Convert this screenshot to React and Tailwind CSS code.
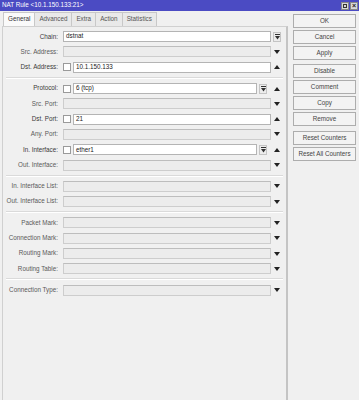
import React from "react";

const rows = [
  { label: "Chain:", value: "dstnat", filled: true, side: "box" },
  { label: "Src. Address:", side: "down" },
  { label: "Dst. Address:", value: "10.1.150.133", filled: true, check: true, side: "up" },
  "sep",
  { label: "Protocol:", value: "6 (tcp)", filled: true, check: true, box: true, side: "up" },
  { label: "Src. Port:", side: "down" },
  { label: "Dst. Port:", value: "21", filled: true, check: true, side: "up" },
  { label: "Any. Port:", side: "down" },
  { label: "In. Interface:", value: "ether1", filled: true, check: true, box: true, side: "up" },
  { label: "Out. Interface:", side: "down" },
  "sep",
  { label: "In. Interface List:", side: "down" },
  { label: "Out. Interface List:", side: "down" },
  "sep",
  { label: "Packet Mark:", side: "down" },
  { label: "Connection Mark:", side: "down" },
  { label: "Routing Mark:", side: "down" },
  { label: "Routing Table:", side: "down" },
  "sep",
  { label: "Connection Type:", side: "down" },
];

const tabs = ["General", "Advanced", "Extra", "Action", "Statistics"];

function Arrow({ up }) {
  return (
    <svg width="6" height="4" viewBox="0 0 6 4">
      {up ? (
        <polygon points="0,4 6,4 3,0" fill="#222" />
      ) : (
        <polygon points="0,0 6,0 3,4" fill="#222" />
      )}
    </svg>
  );
}

function DropBox() {
  return (
    <div className="w-[8px] h-[10px] border border-[#c4c4c4] bg-[#ececec] flex items-center justify-center">
      <svg width="5" height="6" viewBox="0 0 5 6">
        <rect x="0" y="0" width="5" height="1" fill="#333" />
        <polygon points="0,2 5,2 2.5,5.5" fill="#333" />
      </svg>
    </div>
  );
}

function Row({ row }) {
  return (
    <div className="flex items-center h-[15.3px]">
      <div
        className={`w-[56px] text-right pr-[1px] ${
          row.filled ? "text-[#3a3a3a]" : "text-[#5a5a5a]"
        }`}
      >
        {row.label}
      </div>
      <div className="flex items-center flex-1 ml-[4px]">
        {row.check && (
          <div className="w-[8px] h-[8px] border border-[#9a9a9a] bg-white mr-[2px]" />
        )}
        <div
          className={`flex-1 h-[11px] border px-[2px] flex items-center ${
            row.filled
              ? "bg-white border-[#b4b4b4] text-[#222]"
              : "bg-[#ececec] border-[#cdcdcd] border-t-[#bdbdbd]"
          }`}
        >
          {row.value}
        </div>
        {row.box && (
          <div className="ml-[2px] mr-[4px]">
            <DropBox />
          </div>
        )}
      </div>
      <div className="w-[12px] flex items-center justify-center">
        {row.side === "box" && <DropBox />}
        {row.side === "up" && <Arrow up />}
        {row.side === "down" && <Arrow />}
      </div>
    </div>
  );
}

function Button({ children, className = "" }) {
  return (
    <div
      className={`h-[14px] border border-[#adadad] bg-[#f3f3f3] text-[#444] flex items-center justify-center ${className}`}
    >
      {children}
    </div>
  );
}

export default function App() {
  return (
    <div
      className="w-[359px] h-[400px] bg-[#f0f0f0] overflow-hidden text-[6.3px] leading-none"
      style={{ fontFamily: '"Liberation Sans", Arial, sans-serif' }}
    >
      <div className="h-[11px] bg-[#4b4bc3] flex items-center justify-between pl-[2px] pr-[1px]">
        <span className="text-white">NAT Rule &lt;10.1.150.133:21&gt;</span>
        <div className="flex gap-[1px]">
          <div className="w-[8px] h-[8px] bg-[#d8d8d8] border border-[#888] flex items-center justify-center">
            <div className="w-[4px] h-[4px] border border-[#333]" />
          </div>
          <div className="w-[8px] h-[8px] bg-[#d8d8d8] border border-[#888] flex items-center justify-center text-[#222] text-[7px] font-bold">
            ×
          </div>
        </div>
      </div>

      <div className="flex h-[389px]">
        <div className="w-[288px] flex flex-col pt-[1px]">
          <div className="flex h-[14px] pl-[3px]">
            {tabs.map((t, i) => (
              <div
                key={t}
                className={`px-[4px] flex items-center border-t border-r border-[#c8c8c8] ${
                  i === 0
                    ? "bg-[#fafafa] border-l text-[#333]"
                    : "bg-[#e9e9e9] text-[#555]"
                }`}
              >
                {t}
              </div>
            ))}
          </div>
          <div className="flex-1 ml-[2px] border-l border-t border-r-2 border-[#d0d0d0] border-r-[#c4c4c4] bg-[#f0f0f0] pt-[2px] pr-[3px]">
            {rows.map((row, i) =>
              row === "sep" ? (
                <div key={i} className="h-[6px] flex items-center pl-[3px]">
                  <div className="w-full h-[2px] border-t border-[#dadada] border-b border-b-white" />
                </div>
              ) : (
                <Row key={i} row={row} />
              )
            )}
          </div>
        </div>

        <div className="flex-1 pl-[5px] pr-[3px] pt-[3px] flex flex-col gap-[2px]">
          <Button>OK</Button>
          <Button>Cancel</Button>
          <Button>Apply</Button>
          <Button className="mt-[2px]">Disable</Button>
          <Button>Comment</Button>
          <Button>Copy</Button>
          <Button>Remove</Button>
          <Button className="mt-[3px]">Reset Counters</Button>
          <Button>Reset All Counters</Button>
        </div>
      </div>
    </div>
  );
}
